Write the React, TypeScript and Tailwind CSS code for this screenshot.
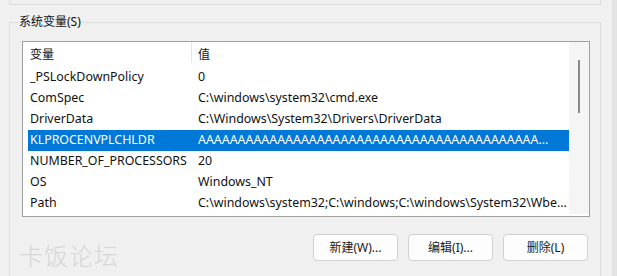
const rows: [string, string][] = [
  ["_PSLockDownPolicy", "0"],
  ["ComSpec", "C:\\windows\\system32\\cmd.exe"],
  ["DriverData", "C:\\Windows\\System32\\Drivers\\DriverData"],
  ["KLPROCENVPLCHLDR", "A".repeat(43) + "..."],
  ["NUMBER_OF_PROCESSORS", "20"],
  ["OS", "Windows_NT"],
  ["Path", "C:\\windows\\system32;C:\\windows;C:\\windows\\System32\\Wbe..."],
];

const selected = 3;

function Btn({ label }: { label: string }) {
  return (
    <button className="w-[85px] h-[27px] rounded-[4px] border border-[#d1d1d1] bg-[#fdfdfd] text-[12px] text-[#1b1b1b] flex items-center justify-center">
      {label}
    </button>
  );
}

export default function App() {
  return (
    <div
      className="w-[617px] h-[276px] bg-[#f0f0f0] flex overflow-hidden text-[#111]"
      style={{ fontFamily: '"Noto Sans", "Noto Sans CJK SC", sans-serif' }}
    >
      <div className="w-[612px] relative">
        {/* tail of the user-variables group */}
        <div className="ml-[9px] w-[592px] h-[5px] border-x border-b border-[#dcdcdc]" />

        {/* system variables group */}
        <div className="relative mt-[17px] ml-[9px] w-[592px] h-[260px] border-x border-t border-[#dcdcdc]">
          <span className="absolute -top-[10px] left-[8px] px-[1px] bg-[#f0f0f0] text-[12px] leading-[18px]">
            系统变量(S)
          </span>

          <div className="mt-[18px] ml-[12px] w-[568px] h-[176px] border border-[#a0a0a0] bg-white flex">
            <div className="flex-1 flex flex-col">
              <div className="h-[25px] flex items-center text-[12px]">
                <div className="w-[168px] pl-[7px]">变量</div>
                <div className="w-px self-stretch mb-[4px] bg-[#e5e5e5]" />
                <div className="pl-[6px]">值</div>
              </div>
              {rows.map(([name, value], i) => (
                <div
                  key={name}
                  className={`ml-[5px] h-[21px] flex items-center text-[12.4px] whitespace-nowrap ${
                    i === selected ? "bg-[#0078d7] text-white" : ""
                  }`}
                >
                  <div className="w-[170px] pl-[2px]">{name}</div>
                  <div className="overflow-hidden">{value}</div>
                </div>
              ))}
            </div>
            <div className="w-[20px] bg-[#f5f5f5] mb-[2px] flex justify-center">
              <div className="w-[2px] h-[53px] mt-[18px] bg-[#8a8a8a]" />
            </div>
          </div>

          <div className="mt-[17px] mr-[12px] flex justify-end gap-[10px]">
            <Btn label="新建(W)..." />
            <Btn label="编辑(I)..." />
            <Btn label="删除(L)" />
          </div>

          <span className="absolute left-[9px] top-[218px] text-[24px] leading-[30px] font-light text-[#d6d6d6] tracking-[1px]">
            卡饭论坛
          </span>
        </div>
      </div>
      <div className="w-[5px] bg-[#e3e3e3]" />
    </div>
  );
}
